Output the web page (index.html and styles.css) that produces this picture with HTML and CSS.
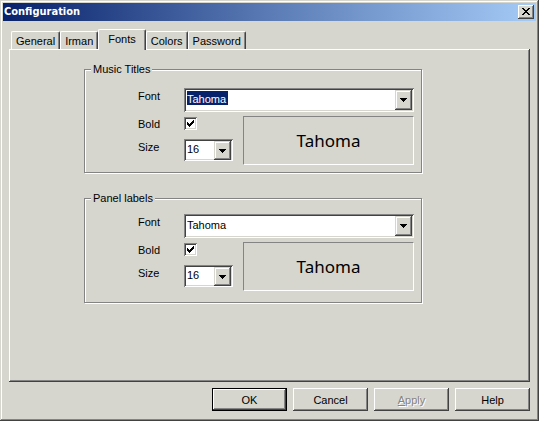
FILE: index.html
```html
<!DOCTYPE html>
<html lang="en">
<head>
<meta charset="utf-8">
<title>Configuration</title>
<link rel="stylesheet" href="styles.css">
</head>
<body>
<main class="window">
  <header class="titlebar">
    <h1>Configuration</h1>
    <button class="close" type="button" aria-label="Close">
      <svg width="8" height="7" viewBox="0 0 8 7" shape-rendering="crispEdges"><path d="M0 0h2v1h1v1h2V1h1V0h2v1H7v1H6v1H5v1h1v1h1v1h1v1H6V6H5V5H3v1H2v1H0V6h1V5h1V4h1V3H2V2H1V1H0z"/></svg>
    </button>
  </header>
  <form class="content">
    <div class="tabs" role="tablist">
      <button class="tab" type="button" role="tab">General</button>
      <button class="tab" type="button" role="tab">Irman</button>
      <button class="tab tab-active" type="button" role="tab" aria-selected="true">Fonts</button>
      <button class="tab" type="button" role="tab">Colors</button>
      <button class="tab" type="button" role="tab">Password</button>
    </div>
    <section class="panel" role="tabpanel">
      <fieldset class="group">
        <legend>Music Titles</legend>
        <div class="fields">
          <label for="title-font">Font</label>
          <div class="combo combo-wide">
            <select id="title-font" class="highlighted"><option>Tahoma</option></select>
            <span class="arrow"><svg width="7" height="4" viewBox="0 0 7 4" shape-rendering="crispEdges"><path d="M0 0h7v1H6v1H5v1H4v1H3V3H2V2H1V1H0z"/></svg></span>
          </div>
          <label for="title-bold">Bold</label>
          <span class="check"><input id="title-bold" type="checkbox" checked><svg width="7" height="7" viewBox="0 0 7 7" shape-rendering="crispEdges"><path d="M0 2h1v1h1v1h1V3h1V2h1V1h1V0h1v3H6v1H5v1H4v1H3v1H2V6H1V5H0z"/></svg></span>
          <label for="title-size">Size</label>
          <div class="combo">
            <select id="title-size"><option>16</option></select>
            <span class="arrow"><svg width="7" height="4" viewBox="0 0 7 4" shape-rendering="crispEdges"><path d="M0 0h7v1H6v1H5v1H4v1H3V3H2V2H1V1H0z"/></svg></span>
          </div>
          <output class="preview">Tahoma</output>
        </div>
      </fieldset>
      <fieldset class="group group-labels">
        <legend>Panel labels</legend>
        <div class="fields">
          <label for="label-font">Font</label>
          <div class="combo combo-wide">
            <select id="label-font"><option>Tahoma</option></select>
            <span class="arrow"><svg width="7" height="4" viewBox="0 0 7 4" shape-rendering="crispEdges"><path d="M0 0h7v1H6v1H5v1H4v1H3V3H2V2H1V1H0z"/></svg></span>
          </div>
          <label for="label-bold">Bold</label>
          <span class="check"><input id="label-bold" type="checkbox" checked><svg width="7" height="7" viewBox="0 0 7 7" shape-rendering="crispEdges"><path d="M0 2h1v1h1v1h1V3h1V2h1V1h1V0h1v3H6v1H5v1H4v1H3v1H2V6H1V5H0z"/></svg></span>
          <label for="label-size">Size</label>
          <div class="combo">
            <select id="label-size"><option>16</option></select>
            <span class="arrow"><svg width="7" height="4" viewBox="0 0 7 4" shape-rendering="crispEdges"><path d="M0 0h7v1H6v1H5v1H4v1H3V3H2V2H1V1H0z"/></svg></span>
          </div>
          <output class="preview">Tahoma</output>
        </div>
      </fieldset>
    </section>
    <footer class="actions">
      <button class="btn btn-default" type="submit">OK</button>
      <button class="btn" type="button">Cancel</button>
      <button class="btn" type="button" disabled><u>A</u>pply</button>
      <button class="btn" type="button">Help</button>
    </footer>
  </form>
</main>
</body>
</html>
```
FILE: styles.css
```css
:root {
  --face: #d6d6ce;
  --shade: #848484;
  --dark: #424242;
  --navy: #08216b;
}

* { box-sizing: border-box; }

body {
  margin: 0;
  background: var(--face);
  color: #000;
  font: 11px/16px "Liberation Sans", Arial, sans-serif;
}

button, select {
  font: inherit;
  color: inherit;
  margin: 0;
  border-radius: 0;
}

svg { display: block; }

.window {
  display: flex;
  flex-direction: column;
  min-height: 100vh;
  padding: 3px;
  box-shadow: inset -1px -1px var(--dark), inset 1px 1px var(--face), inset -2px -2px var(--shade), inset 2px 2px #fff;
}

.titlebar {
  display: flex;
  align-items: center;
  justify-content: space-between;
  height: 18px;
  padding: 0 2px 0 1px;
  background: linear-gradient(90deg, var(--navy), #5a7bb5 50%, #a5cbf7);
}

.titlebar h1 {
  margin: 0;
  color: #fff;
  font: bold 11px/16px "DejaVu Sans Condensed", "Noto Sans", sans-serif;
}

.close {
  display: grid;
  place-items: center;
  width: 16px;
  height: 14px;
  padding: 0 1px 1px 0;
  border: 0;
  background: var(--face);
  box-shadow: inset -1px -1px var(--dark), inset 1px 1px #fff, inset -2px -2px var(--shade);
}

.content {
  display: flex;
  flex: 1;
  flex-direction: column;
  padding: 8px 6px 7px;
}

.tabs {
  display: flex;
  align-items: flex-end;
  height: 20px;
  padding-left: 2px;
}

.tab {
  height: 18px;
  padding: 0 4px;
  border: solid;
  border-width: 1px 1px 0;
  border-color: #fff var(--dark) #fff #fff;
  border-radius: 2px 2px 0 0;
  background: var(--face);
  box-shadow: inset -1px 0 var(--shade);
}

.tab-active {
  z-index: 1;
  height: 21px;
  margin-bottom: -1px;
  padding: 0 9px 3px;
}

.panel {
  flex: 1;
  padding: 12px 108px 12px 75px;
  box-shadow: inset -1px -1px var(--dark), inset 1px 1px #fff, inset -2px -2px var(--shade);
}

.group {
  min-width: 0;
  margin: 0;
  padding: 11px 7px 7px 53px;
  border: 1px solid var(--shade);
  box-shadow: 1px 1px #fff, inset 1px 1px #fff;
}

.group legend {
  margin-left: -47px;
  padding: 0 2px;
  background: var(--face);
}

.group-labels {
  margin-top: 17px;
  padding-top: 8px;
  padding-bottom: 11px;
}

.fields {
  display: grid;
  grid-template-columns: 46px 49px 1fr;
  grid-template-rows: 28px 23px 26px;
  align-items: start;
}

.fields label { grid-column: 1; }

.fields .combo-wide { grid-column: 2 / 4; height: 24px; }

.fields .combo-wide,
.fields label[for$="font"] { grid-row: 1; }

.combo {
  display: grid;
  grid-template-columns: 1fr 17px;
  height: 22px;
  padding: 2px;
  background: #fff;
  box-shadow: inset 1px 1px var(--shade), inset -1px -1px #fff, inset 2px 2px var(--dark), inset -2px -2px var(--face);
}

.combo select {
  grid-area: 1 / 1 / 2 / 3;
  appearance: none;
  width: 100%;
  min-width: 0;
  padding: 0 0 3px 1px;
  border: 0;
  outline: 0;
  background: transparent;
}

.combo .highlighted {
  color: #fff;
  background: linear-gradient(var(--navy), var(--navy)) 1px 1px / 41px 14px no-repeat;
}

.highlighted option { color: #000; }

.arrow {
  grid-area: 1 / 2;
  display: grid;
  place-items: center;
  background: var(--face);
  box-shadow: inset -1px -1px var(--dark), inset 1px 1px var(--face), inset -2px -2px var(--shade), inset 2px 2px #fff;
  pointer-events: none;
}

.check {
  display: grid;
  place-items: center;
  width: 13px;
  height: 13px;
  margin-top: 1px;
}

.check input {
  grid-area: 1 / 1;
  appearance: none;
  width: 13px;
  height: 13px;
  margin: 0;
  background: #fff;
  box-shadow: inset 1px 1px var(--shade), inset -1px -1px #fff, inset 2px 2px var(--dark), inset -2px -2px var(--face);
}

.check svg {
  grid-area: 1 / 1;
  z-index: 1;
  visibility: hidden;
  pointer-events: none;
}

.check input:checked + svg { visibility: visible; }

.preview {
  display: grid;
  grid-area: 2 / 3 / 4 / 4;
  place-items: center;
  height: 49px;
  margin-left: 10px;
  border: 1px solid;
  border-color: var(--shade) #fff #fff var(--shade);
  font: 17px/20px "Noto Sans", sans-serif;
}

.actions {
  display: flex;
  justify-content: flex-end;
  gap: 6px;
  padding-top: 6px;
}

.btn {
  width: 75px;
  height: 23px;
  padding: 0;
  border: 0;
  background: var(--face);
  box-shadow: inset -1px -1px var(--dark), inset 1px 1px #fff, inset -2px -2px var(--shade);
}

.btn-default {
  border: 1px solid #000;
}

.btn:disabled {
  color: var(--shade);
  text-shadow: 1px 1px #fff;
}
```
